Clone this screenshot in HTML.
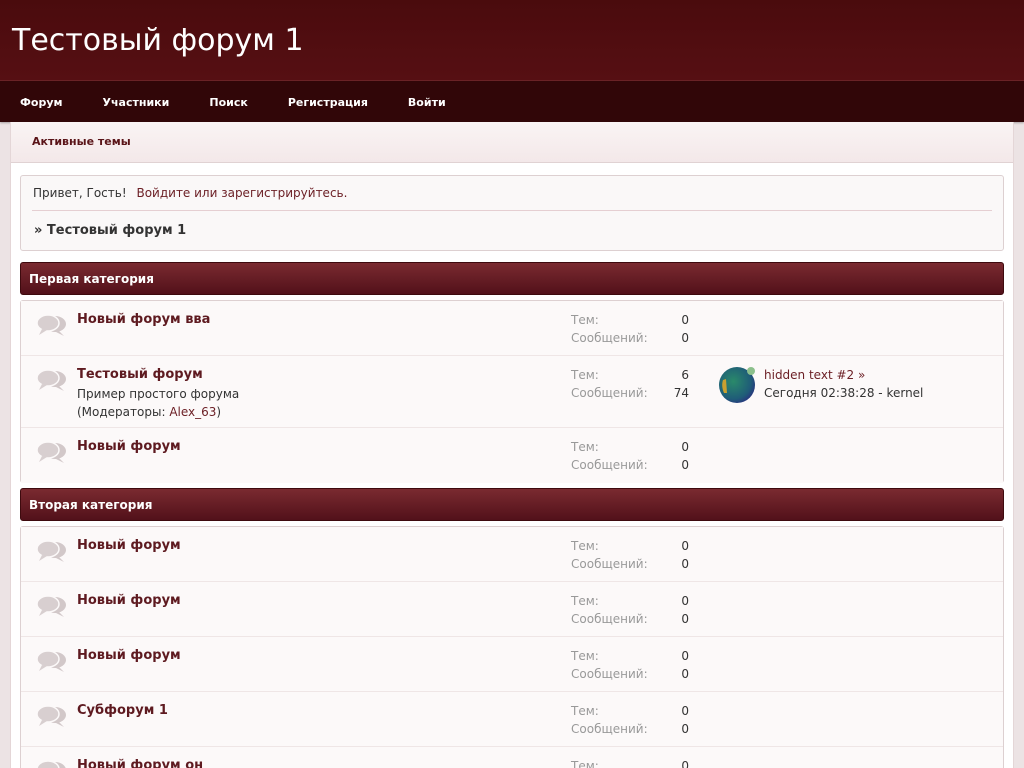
<!DOCTYPE html>
<html><head><meta charset="utf-8"><style>
*{box-sizing:border-box;margin:0;padding:0}
html,body{width:1024px;height:768px;overflow:hidden}
body{background:#ece3e4;font-family:"DejaVu Sans","Liberation Sans",sans-serif;font-size:12px;color:#333;position:relative}
.hdr{height:81px;background:linear-gradient(#4a0b0d,#560f13);border-bottom:1px solid #6a2226;position:relative}
.hdr h1{position:absolute;left:12px;top:23px;font-weight:normal;font-size:30px;color:#fff}
.nav{height:41px;background:#310608;display:flex;align-items:center;box-shadow:0 1px 2px rgba(0,0,0,.3)}
.nav a{color:#fff;font-weight:bold;font-size:11px;margin-left:20px;margin-right:20px;text-decoration:none;position:relative;top:1px}
.wrap{position:absolute;left:10px;top:122px;width:1004px;height:646px;background:#fff;border-left:1px solid #e4d6d7;border-right:1px solid #e4d6d7;overflow:hidden}
.act{height:41px;background:linear-gradient(#faf4f4,#f3e8e9);border-bottom:1px solid #e0d2d3;padding:13px 0 0 21px;font-weight:bold;font-size:11px;color:#5a1418}
.box{position:absolute;left:9px;width:984px;background:#faf8f8;border:1px solid #ddd0d1;border-radius:3px}
.greet{top:53px;height:76px}
.greet .l1{position:absolute;left:12px;top:10px;font-size:12px}
.greet .l1 a{color:#6b1e24;margin-left:6px}
.greet hr{position:absolute;left:11px;right:11px;top:34px;border:0;border-top:1px solid #e5cfd2}
.greet .l2{position:absolute;left:13px;top:47px;font-weight:bold;font-size:13px}
.cat{position:absolute;left:9px;width:984px;height:33px;background:linear-gradient(#7a2a30,#52111a);border-radius:3px;color:#fff;font-weight:bold;font-size:12px;padding:9px 0 0 8px;border:1px solid #3e0a0e}
.row{position:relative;height:55px;border-bottom:1px solid #efe6e6;background:#fcf9f9}
.row:last-child{border-bottom:0}
.ic{position:absolute;left:15px;top:13px}
.t{position:absolute;left:56px;top:11px;font-weight:bold;font-size:13px;color:#5e1a20}
.d{position:absolute;left:56px;top:29px;line-height:18px;font-size:12px}
.d a{color:#6b1e24}
.s{position:absolute;left:550px;top:10px;line-height:18px;color:#999;width:118px}
.s b{font-weight:normal;color:#333;float:right}
.lp{position:absolute;left:698px;top:10px}
</style></head><body>
<div class="hdr"><h1>Тестовый форум 1</h1></div>
<div class="nav"><a>Форум</a><a>Участники</a><a>Поиск</a><a>Регистрация</a><a>Войти</a></div>
<div class="wrap">
<div class="act">Активные темы</div>
<div class="box greet"><div class="l1">Привет, Гость! <a>Войдите или зарегистрируйтесь.</a></div><hr><div class="l2">» Тестовый форум 1</div></div>
<div class="cat" style="top:140px">Первая категория</div>
<div class="box" style="top:178px;height:183px">
<div class="row"><svg class="ic" width="32" height="24"><ellipse cx="19" cy="10" rx="11" ry="8" fill="#d2c8c9"/><path d="M22 16 L28 22 L18 17Z" fill="#d2c8c9"/><ellipse cx="12" cy="9" rx="11" ry="8" fill="#d8cfd0" stroke="#fcf9f9" stroke-width="1.5"/><path d="M6 15 L3 21 L11 16Z" fill="#d8cfd0"/></svg><div class="t">Новый форум вва</div><div class="s">Тем:<b>0</b><br>Сообщений:<b>0</b></div></div>
<div class="row" style="height:72px"><svg class="ic" width="32" height="24"><ellipse cx="19" cy="10" rx="11" ry="8" fill="#d2c8c9"/><path d="M22 16 L28 22 L18 17Z" fill="#d2c8c9"/><ellipse cx="12" cy="9" rx="11" ry="8" fill="#d8cfd0" stroke="#fcf9f9" stroke-width="1.5"/><path d="M6 15 L3 21 L11 16Z" fill="#d8cfd0"/></svg><div class="t">Тестовый форум</div><div class="d">Пример простого форума<br>(Модераторы: <a>Alex_63</a>)</div><div class="s">Тем:<b>6</b><br>Сообщений:<b>74</b></div>
<div class="lp"><svg width="38" height="38" style="position:absolute;left:0;top:0"><defs><radialGradient id="g" cx="0.4" cy="0.4" r="0.7"><stop offset="0" stop-color="#2a8a6a"/><stop offset="0.7" stop-color="#1f5c78"/><stop offset="1" stop-color="#2a2a80"/></radialGradient></defs><circle cx="18" cy="19" r="18" fill="url(#g)"/><path d="M4 14 Q2 20 5 27 L8 27 L7 13Z" fill="#c8a030"/><circle cx="32" cy="5" r="4" fill="#8cc08c"/></svg>
<div style="position:absolute;left:45px;top:0;width:200px;line-height:18px"><span style="color:#6b1e24">hidden text #2 »</span><br>Сегодня 02:38:28 - kernel</div></div></div>
<div class="row"><svg class="ic" width="32" height="24"><ellipse cx="19" cy="10" rx="11" ry="8" fill="#d2c8c9"/><path d="M22 16 L28 22 L18 17Z" fill="#d2c8c9"/><ellipse cx="12" cy="9" rx="11" ry="8" fill="#d8cfd0" stroke="#fcf9f9" stroke-width="1.5"/><path d="M6 15 L3 21 L11 16Z" fill="#d8cfd0"/></svg><div class="t">Новый форум</div><div class="s">Тем:<b>0</b><br>Сообщений:<b>0</b></div></div>
</div>
<div class="cat" style="top:366px">Вторая категория</div>
<div class="box" style="top:404px;height:320px">
<div class="row"><svg class="ic" width="32" height="24"><ellipse cx="19" cy="10" rx="11" ry="8" fill="#d2c8c9"/><path d="M22 16 L28 22 L18 17Z" fill="#d2c8c9"/><ellipse cx="12" cy="9" rx="11" ry="8" fill="#d8cfd0" stroke="#fcf9f9" stroke-width="1.5"/><path d="M6 15 L3 21 L11 16Z" fill="#d8cfd0"/></svg><div class="t">Новый форум</div><div class="s">Тем:<b>0</b><br>Сообщений:<b>0</b></div></div>
<div class="row"><svg class="ic" width="32" height="24"><ellipse cx="19" cy="10" rx="11" ry="8" fill="#d2c8c9"/><path d="M22 16 L28 22 L18 17Z" fill="#d2c8c9"/><ellipse cx="12" cy="9" rx="11" ry="8" fill="#d8cfd0" stroke="#fcf9f9" stroke-width="1.5"/><path d="M6 15 L3 21 L11 16Z" fill="#d8cfd0"/></svg><div class="t">Новый форум</div><div class="s">Тем:<b>0</b><br>Сообщений:<b>0</b></div></div>
<div class="row"><svg class="ic" width="32" height="24"><ellipse cx="19" cy="10" rx="11" ry="8" fill="#d2c8c9"/><path d="M22 16 L28 22 L18 17Z" fill="#d2c8c9"/><ellipse cx="12" cy="9" rx="11" ry="8" fill="#d8cfd0" stroke="#fcf9f9" stroke-width="1.5"/><path d="M6 15 L3 21 L11 16Z" fill="#d8cfd0"/></svg><div class="t">Новый форум</div><div class="s">Тем:<b>0</b><br>Сообщений:<b>0</b></div></div>
<div class="row"><svg class="ic" width="32" height="24"><ellipse cx="19" cy="10" rx="11" ry="8" fill="#d2c8c9"/><path d="M22 16 L28 22 L18 17Z" fill="#d2c8c9"/><ellipse cx="12" cy="9" rx="11" ry="8" fill="#d8cfd0" stroke="#fcf9f9" stroke-width="1.5"/><path d="M6 15 L3 21 L11 16Z" fill="#d8cfd0"/></svg><div class="t">Субфорум 1</div><div class="s">Тем:<b>0</b><br>Сообщений:<b>0</b></div></div>
<div class="row"><svg class="ic" width="32" height="24"><ellipse cx="19" cy="10" rx="11" ry="8" fill="#d2c8c9"/><path d="M22 16 L28 22 L18 17Z" fill="#d2c8c9"/><ellipse cx="12" cy="9" rx="11" ry="8" fill="#d8cfd0" stroke="#fcf9f9" stroke-width="1.5"/><path d="M6 15 L3 21 L11 16Z" fill="#d8cfd0"/></svg><div class="t">Новый форум он</div><div class="s">Тем:<b>0</b><br>Сообщений:<b>0</b></div></div>
</div>
</div>
</body></html>
